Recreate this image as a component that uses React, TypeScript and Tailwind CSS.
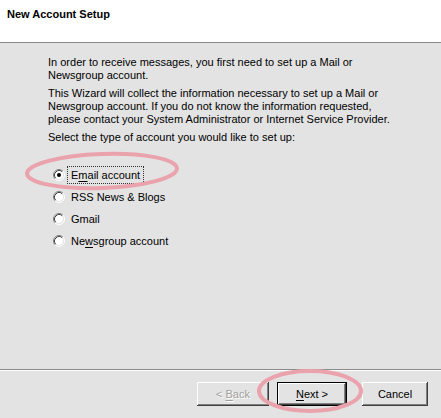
const FONT = 'font-["Liberation_Sans",Arial,sans-serif]';

function Radio({ checked }: { checked?: boolean }) {
  return (
    <svg width="12" height="12" viewBox="0 0 12 12" className="shrink-0">
      <circle cx="6" cy="6" r="5" fill="#ffffff" />
      <path d="M2.11 9.89A5.5 5.5 0 0 1 9.89 2.11" fill="none" stroke="#808080" strokeWidth="1" />
      <path d="M9.89 2.11A5.5 5.5 0 0 1 2.11 9.89" fill="none" stroke="#ffffff" strokeWidth="1" />
      <path d="M2.82 9.18A4.5 4.5 0 0 1 9.18 2.82" fill="none" stroke="#404040" strokeWidth="1" />
      <path d="M9.18 2.82A4.5 4.5 0 0 1 2.82 9.18" fill="none" stroke="#e3e3e3" strokeWidth="1" />
      {checked && <circle cx="6" cy="6" r="2" fill="#000000" />}
    </svg>
  );
}

const OPTIONS = [
  { pre: 'E', key: 'm', post: 'ail account', checked: true },
  { pre: 'RSS News & Blogs', key: '', post: '' },
  { pre: 'Gmail', key: '', post: '' },
  { pre: 'Ne', key: 'w', post: 'sgroup account' },
];

export default function App() {
  return (
    <div className={`relative flex h-[418px] w-[441px] flex-col bg-[#e3e3e3] text-[11px] leading-[13px] text-black ${FONT}`}>
      {/* Header */}
      <div className="h-[43px] shrink-0 border-b border-[#8a8a8a] bg-white px-[7px] pt-[8px]">
        <div className="font-bold">New Account Setup</div>
      </div>

      {/* Body */}
      <div className="flex-1 pl-[48px] pt-[13px]">
        <p className="whitespace-nowrap">
          In order to receive messages, you first need to set up a Mail or
          <br />
          Newsgroup account.
        </p>
        <p className="mt-[5px] whitespace-nowrap">
          This Wizard will collect the information necessary to set up a Mail or
          <br />
          Newsgroup account. If you do not know the information requested,
          <br />
          please contact your System Administrator or Internet Service Provider.
        </p>
        <p className="mt-[5px]">Select the type of account you would like to set up:</p>

        <div className="mt-[20px] flex flex-col pl-[5px]">
          {OPTIONS.map((o, i) => (
            <div key={i} className="flex h-[22px] items-center gap-[3px]">
              <Radio checked={o.checked} />
              <span
                className={`px-[3px] py-[1px] leading-[14px] ${
                  o.checked ? 'outline-1 outline-dotted outline-[#333]' : 'outline-1 outline-transparent'
                }`}
              >
                {o.pre}
                {o.key && <span className="underline underline-offset-2">{o.key}</span>}
                {o.post}
              </span>
            </div>
          ))}
        </div>
      </div>

      {/* Footer */}
      <div className="h-[49px] shrink-0 border-t border-[#8a8a8a]">
        <div className="flex h-full border-t border-white pl-[197px] pt-[11px]">
          <button className="h-[24px] w-[72px] text-[#a0a0a0] [text-shadow:1px_1px_0_#ffffff] shadow-[inset_-1px_-1px_0_#404040,inset_1px_1px_0_#ffffff,inset_-2px_-2px_0_#808080]">
            &lt; <span className="underline underline-offset-2">B</span>ack
          </button>
          <button className="ml-[8px] h-[24px] w-[70px] border border-black shadow-[inset_-1px_-1px_0_#404040,inset_1px_1px_0_#ffffff,inset_-2px_-2px_0_#808080]">
            <span className="underline underline-offset-2">N</span>ext &gt;
          </button>
          <button className="ml-[15px] h-[24px] w-[66px] shadow-[inset_-1px_-1px_0_#404040,inset_1px_1px_0_#ffffff,inset_-2px_-2px_0_#808080]">
            Cancel
          </button>
        </div>
      </div>

      {/* Annotation marks */}
      <svg className="pointer-events-none absolute inset-0" width="441" height="418">
        <ellipse cx="102" cy="171" rx="75" ry="17" fill="none" stroke="#eaa3ad" strokeWidth="4" transform="rotate(-2 102 171)" />
        <ellipse cx="310" cy="391" rx="51" ry="20" fill="none" stroke="#eaa3ad" strokeWidth="4" />
      </svg>
    </div>
  );
}
